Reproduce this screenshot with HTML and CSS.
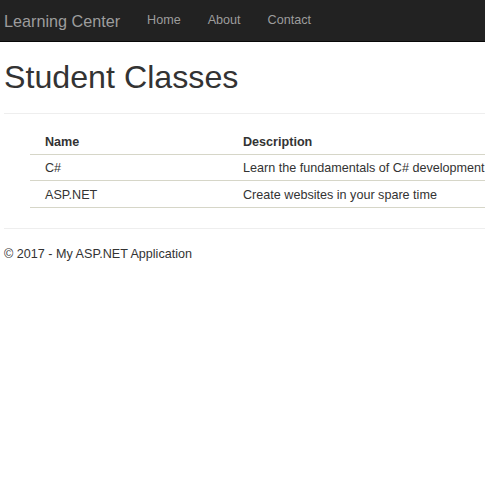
FILE: index.html
```html
<!DOCTYPE html>
<html>
<head>
<meta charset="utf-8">
<title>Student Classes</title>
<link rel="stylesheet" href="styles.css">
</head>
<body>
<header class="navbar">
  <a class="brand" href="#">Learning Center</a>
  <nav class="nav">
    <a href="#">Home</a>
    <a href="#">About</a>
    <a href="#">Contact</a>
  </nav>
</header>
<main class="container">
  <h1 class="title">Student Classes</h1>
  <hr class="rule-top">
  <div class="table-wrap">
    <table class="classes">
      <thead>
        <tr><th class="col-name">Name</th><th>Description</th></tr>
      </thead>
      <tbody>
        <tr><td>C#</td><td>Learn the fundamentals of C# development</td></tr>
        <tr><td>ASP.NET</td><td>Create websites in your spare time</td></tr>
      </tbody>
    </table>
  </div>
  <hr class="rule-footer">
  <footer class="footer">
    <p>&copy; 2017 - My ASP.NET Application</p>
  </footer>
</main>
</body>
</html>
```

FILE: styles.css
```css
body {
  margin: 0;
  font-family: "Liberation Sans", Arial, sans-serif;
  font-size: 12.6px;
  line-height: 18px;
  color: #333;
  background: #fff;
}
a {
  text-decoration: none;
}
.navbar {
  display: flex;
  align-items: flex-start;
  height: 41px;
  background: #222;
  border-bottom: 1px solid #080808;
}
.brand {
  display: block;
  padding: 11.6px 13.5px 0 4px;
  font-size: 16.2px;
  line-height: 18px;
  color: #9d9d9d;
}
.nav {
  display: flex;
}
.nav a {
  display: block;
  padding: 10.8px 13.5px 0;
  font-size: 12.6px;
  line-height: 18px;
  color: #9d9d9d;
}
.container {
  padding-left: 4px;
}
.title {
  margin: 17.5px 0 0;
  font-size: 32.2px;
  font-weight: 500;
  line-height: 1.1;
  color: #333;
}
.rule-top {
  height: 0;
  border: 0;
  border-top: 1px solid #eee;
  margin: 18px 0 14.6px;
}
.table-wrap {
  margin-left: 26px;
  overflow: hidden;
}
.classes {
  width: 100%;
  border-collapse: collapse;
  border-spacing: 0;
  white-space: nowrap;
}
.classes th,
.classes td {
  padding: 4.3px 0 3.1px 15px;
  text-align: left;
  line-height: 18px;
  vertical-align: top;
}
.classes th {
  font-weight: bold;
  border-bottom: 1px solid #d6d6c8;
}
.classes td {
  border-bottom: 1px solid #d6d6c8;
}
.classes .col-name {
  width: 183px;
}
.rule-footer {
  height: 0;
  border: 0;
  border-top: 1px solid #eee;
  margin: 20.2px 0 0;
}
.footer p {
  margin: 16.5px 0 0;
}
```
